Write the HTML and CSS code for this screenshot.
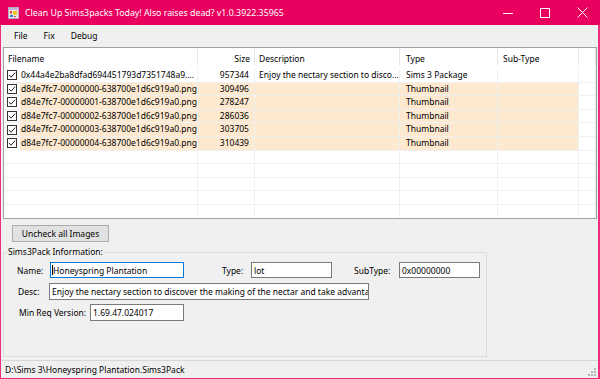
FILE: index.html
```html
<!DOCTYPE html>
<html>
<head>
<meta charset="utf-8">
<title>Clean Up Sims3packs Today!</title>
<link rel="stylesheet" href="styles.css">
</head>
<body>
<div class="window">
  <div class="titlebar">
    <svg class="appicon" viewBox="0 0 11 12" width="11" height="12">
      <rect x="0.5" y="0.5" width="10" height="11" fill="#ECE4F0" stroke="#B9A9C4"/>
      <rect x="1" y="1" width="9" height="2" fill="#C9B9D6"/>
      <rect x="2" y="4" width="2" height="2" fill="#E8463C"/>
      <rect x="2" y="6" width="2" height="1" fill="#F08A3C"/>
      <rect x="5" y="4" width="4" height="4" fill="#F4C623"/>
      <rect x="2" y="8" width="3" height="2" fill="#2D7FD8"/>
      <rect x="6" y="9" width="2" height="1" fill="#E8463C"/>
    </svg>
    <span class="title">Clean Up Sims3packs Today! Also raises dead? v1.0.3922.35965</span>
    <span class="spacer"></span>
    <span class="ctl"><svg width="10" height="10" viewBox="0 0 10 10"><path d="M0 5.5H10" stroke="#fff" stroke-width="1"/></svg></span>
    <span class="ctl ctl-max"><svg width="10" height="10" viewBox="0 0 10 10"><rect x="0.5" y="0.5" width="9" height="9" fill="none" stroke="#fff" stroke-width="1"/></svg></span>
    <span class="ctl"><svg width="11" height="11" viewBox="0 0 11 11"><path d="M0.5 0.5L10.5 10.5M10.5 0.5L0.5 10.5" stroke="#fff" stroke-width="1"/></svg></span>
  </div>
  <div class="frame">
    <div class="menubar">
      <span class="menu">File</span>
      <span class="menu">Fix</span>
      <span class="menu">Debug</span>
    </div>
    <div class="list">
      <div class="row head">
        <div class="c c1">Filename</div>
        <div class="c c2">Size</div>
        <div class="c c3">Description</div>
        <div class="c c4">Type</div>
        <div class="c c5">Sub-Type</div>
        <div class="c c6"></div>
      </div>
      <div class="row">
        <div class="c c1"><svg class="chk" viewBox="0 0 10 10"><rect x="0.5" y="0.5" width="9" height="9" fill="#fff" stroke="#333"/><path d="M2 5L4 7.2L8.2 2.6" fill="none" stroke="#222" stroke-width="1"/></svg><span class="name">0x44a4e2ba8dfad694451793d7351748a9....</span></div>
        <div class="c c2">957344</div>
        <div class="c c3">Enjoy the nectary section to disco...</div>
        <div class="c c4">Sims 3 Package</div>
        <div class="c c5"></div>
        <div class="c c6"></div>
      </div>
      <div class="row hl">
        <div class="c c1"><svg class="chk" viewBox="0 0 10 10"><rect x="0.5" y="0.5" width="9" height="9" fill="#fff" stroke="#333"/><path d="M2 5L4 7.2L8.2 2.6" fill="none" stroke="#222" stroke-width="1"/></svg><span class="name">d84e7fc7-00000000-638700e1d6c919a0.png</span></div>
        <div class="c c2">309496</div>
        <div class="c c3"></div>
        <div class="c c4">Thumbnail</div>
        <div class="c c5"></div>
        <div class="c c6"></div>
      </div>
      <div class="row hl">
        <div class="c c1"><svg class="chk" viewBox="0 0 10 10"><rect x="0.5" y="0.5" width="9" height="9" fill="#fff" stroke="#333"/><path d="M2 5L4 7.2L8.2 2.6" fill="none" stroke="#222" stroke-width="1"/></svg><span class="name">d84e7fc7-00000001-638700e1d6c919a0.png</span></div>
        <div class="c c2">278247</div>
        <div class="c c3"></div>
        <div class="c c4">Thumbnail</div>
        <div class="c c5"></div>
        <div class="c c6"></div>
      </div>
      <div class="row hl">
        <div class="c c1"><svg class="chk" viewBox="0 0 10 10"><rect x="0.5" y="0.5" width="9" height="9" fill="#fff" stroke="#333"/><path d="M2 5L4 7.2L8.2 2.6" fill="none" stroke="#222" stroke-width="1"/></svg><span class="name">d84e7fc7-00000002-638700e1d6c919a0.png</span></div>
        <div class="c c2">286036</div>
        <div class="c c3"></div>
        <div class="c c4">Thumbnail</div>
        <div class="c c5"></div>
        <div class="c c6"></div>
      </div>
      <div class="row hl">
        <div class="c c1"><svg class="chk" viewBox="0 0 10 10"><rect x="0.5" y="0.5" width="9" height="9" fill="#fff" stroke="#333"/><path d="M2 5L4 7.2L8.2 2.6" fill="none" stroke="#222" stroke-width="1"/></svg><span class="name">d84e7fc7-00000003-638700e1d6c919a0.png</span></div>
        <div class="c c2">303705</div>
        <div class="c c3"></div>
        <div class="c c4">Thumbnail</div>
        <div class="c c5"></div>
        <div class="c c6"></div>
      </div>
      <div class="row hl">
        <div class="c c1"><svg class="chk" viewBox="0 0 10 10"><rect x="0.5" y="0.5" width="9" height="9" fill="#fff" stroke="#333"/><path d="M2 5L4 7.2L8.2 2.6" fill="none" stroke="#222" stroke-width="1"/></svg><span class="name">d84e7fc7-00000004-638700e1d6c919a0.png</span></div>
        <div class="c c2">310439</div>
        <div class="c c3"></div>
        <div class="c c4">Thumbnail</div>
        <div class="c c5"></div>
        <div class="c c6"></div>
      </div>
      <div class="row"><div class="c"></div><div class="c"></div><div class="c"></div><div class="c"></div><div class="c"></div><div class="c"></div></div>
      <div class="row"><div class="c"></div><div class="c"></div><div class="c"></div><div class="c"></div><div class="c"></div><div class="c"></div></div>
      <div class="row"><div class="c"></div><div class="c"></div><div class="c"></div><div class="c"></div><div class="c"></div><div class="c"></div></div>
      <div class="row"><div class="c"></div><div class="c"></div><div class="c"></div><div class="c"></div><div class="c"></div><div class="c"></div></div>
      <div class="row"><div class="c"></div><div class="c"></div><div class="c"></div><div class="c"></div><div class="c"></div><div class="c"></div></div>
    </div>
    <div class="btn">Uncheck all Images</div>
    <fieldset class="group">
      <legend>Sims3Pack Information:</legend>
      <div class="frow r1">
        <span class="lbl l-name">Name:</span>
        <div class="tb focus w-name"><span class="caret"></span>Honeyspring Plantation</div>
        <span class="lbl l-type">Type:</span>
        <div class="tb w-type">lot</div>
        <span class="lbl l-sub">SubType:</span>
        <div class="tb w-sub">0x00000000</div>
      </div>
      <div class="frow r2">
        <span class="lbl l-desc">Desc:</span>
        <div class="tb w-desc">Enjoy the nectary section to discover the making of the nectar and take advantage of the bees</div>
      </div>
      <div class="frow r3">
        <span class="lbl l-ver">Min Req Version:</span>
        <div class="tb w-ver">1.69.47.024017</div>
      </div>
    </fieldset>
    <div class="status">
      <span class="status-text">D:\Sims 3\Honeyspring Plantation.Sims3Pack</span>
      <svg class="grip" width="10" height="10" viewBox="0 0 10 10">
        <rect x="7" y="1" width="2" height="2" fill="#B4B4B4"/>
        <rect x="7" y="4" width="2" height="2" fill="#B4B4B4"/>
        <rect x="4" y="4" width="2" height="2" fill="#B4B4B4"/>
        <rect x="7" y="7" width="2" height="2" fill="#B4B4B4"/>
        <rect x="4" y="7" width="2" height="2" fill="#B4B4B4"/>
        <rect x="1" y="7" width="2" height="2" fill="#B4B4B4"/>
      </svg>
    </div>
  </div>
</div>
</body>
</html>
```
FILE: styles.css
```css
html, body {
  margin: 0;
  padding: 0;
}
body {
  width: 600px;
  height: 379px;
  overflow: hidden;
  font-family: "Noto Sans", "Liberation Sans", sans-serif;
  font-size: 8.5px;
  color: #000;
}
.window {
  width: 600px;
  height: 379px;
  display: flex;
  flex-direction: column;
}
.titlebar {
  flex: none;
  height: 25px;
  background: #EA005E;
  color: #fff;
  display: flex;
  align-items: center;
}
.appicon {
  flex: none;
  margin-left: 8px;
  width: 11px;
  height: 12px;
}
.title {
  margin-left: 6px;
  font-size: 8.8px;
  white-space: nowrap;
}
.spacer {
  flex: 1;
}
.ctl {
  flex: none;
  width: 36px;
  height: 25px;
  display: flex;
  align-items: center;
  justify-content: center;
}
.ctl-max {
  width: 38px;
}
.frame {
  flex: 1;
  min-height: 0;
  display: flex;
  flex-direction: column;
  background: #F0F0F0;
  border-style: solid;
  border-color: #EC2F7C;
  border-width: 0 2px 1px 1px;
}
.menubar {
  flex: none;
  height: 20px;
  display: flex;
  align-items: center;
  padding-left: 5px;
}
.menu {
  padding: 0 8px;
}
.list {
  flex: none;
  margin: 2px 1px 0 2px;
  height: 172px;
  box-sizing: border-box;
  border: 1px solid #A0A0A0;
  background: #fff;
  overflow: hidden;
}
.row {
  display: grid;
  grid-template-columns: 194px 57px 145px 98px 81px 17px;
  height: 13.6px;
}
.c {
  box-sizing: border-box;
  border-right: 1px solid #F0F0F0;
  border-bottom: 1px solid #F0F0F0;
  white-space: nowrap;
  overflow: hidden;
  line-height: 12.6px;
}
.head {
  height: 21px;
}
.head .c {
  border: 0;
  line-height: 21px;
  background: linear-gradient(#E5E5E5, #E5E5E5) right top / 1px 17px no-repeat;
}
.c1 {
  padding-left: 4px;
}
.row .c1 {
  display: flex;
  align-items: stretch;
}
.head .c1 {
  display: block;
}
.c2 {
  text-align: right;
  padding-right: 5px;
}
.c3 {
  padding-left: 4px;
}
.c4 {
  padding-left: 6px;
}
.c5 {
  padding-left: 5px;
}
.row .c1:not(.head .c1) {
  padding-left: 0;
}
.chk {
  flex: none;
  align-self: center;
  width: 10px;
  height: 10px;
  margin: 0 3px;
}
.name {
  flex: 1;
  padding-left: 1px;
  overflow: hidden;
}
.hl .name,
.hl .c2,
.hl .c3,
.hl .c4,
.hl .c5 {
  background-color: #FDE9CF;
}
.btn {
  flex: none;
  margin: 6px 0 0 11px;
  width: 97px;
  height: 17px;
  box-sizing: border-box;
  border: 1px solid #ADADAD;
  background: #E1E1E1;
  display: flex;
  align-items: center;
  justify-content: center;
}
.group {
  flex: none;
  margin: 4px 0 0 2px;
  width: 484px;
  box-sizing: border-box;
  border: 1px solid #DCDCDC;
  padding: 0 0 35px 0;
  min-inline-size: 0;
}
.group legend {
  padding: 0 1px;
  margin-left: 3px;
  line-height: 12px;
}
.frow {
  display: flex;
  align-items: stretch;
  height: 17px;
}
.r1 {
  margin-top: 4px;
  height: 16px;
}
.r2 {
  margin-top: 5px;
}
.r3 {
  margin-top: 4px;
}
.lbl {
  flex: none;
  display: flex;
  align-items: center;
}
.l-name { margin-left: 13px; width: 33px; }
.l-type { margin-left: 38px; width: 29px; }
.l-sub { margin-left: 22px; width: 45px; }
.l-desc { margin-left: 14px; width: 31px; }
.l-ver { margin-left: 15px; width: 71px; }
.tb {
  flex: none;
  box-sizing: border-box;
  border: 1px solid #7A7A7A;
  background: #fff;
  padding-left: 2px;
  white-space: nowrap;
  overflow: hidden;
  display: flex;
  align-items: center;
}
.focus {
  border-color: #0078D7;
  padding-left: 1px;
}
.caret {
  flex: none;
  width: 0;
  height: 10px;
  border-left: 1px solid #000;
  margin-right: 0;
}
.w-name { width: 134px; }
.w-type { width: 81px; }
.w-sub { width: 81px; }
.w-desc { width: 320px; }
.w-ver { width: 94px; }
.status {
  flex: none;
  margin-top: auto;
  height: 18px;
  box-sizing: border-box;
  border-top: 1px solid #D7D7D7;
  display: flex;
  align-items: center;
  padding-left: 4px;
}
.status-text {
  flex: 1;
  white-space: nowrap;
}
.grip {
  flex: none;
  align-self: flex-end;
  margin: 0 1px 1px 0;
}
```
